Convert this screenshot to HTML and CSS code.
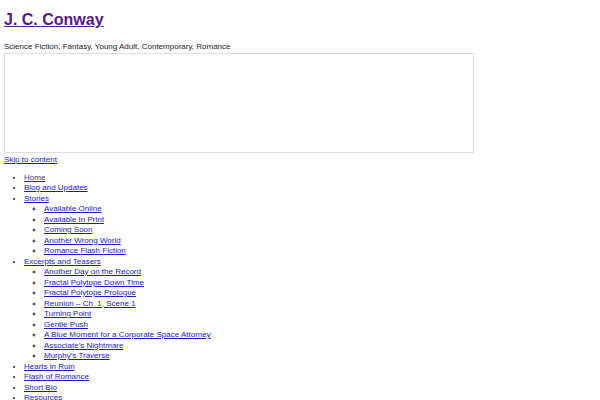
FILE: index.html
```html
<!DOCTYPE html>
<html>
<head>
<meta charset="utf-8">
<link rel="stylesheet" href="styles.css">
</head>
<body>
<header class="site-header">
  <h1 class="site-title"><a class="visited" href="#">J. C. Conway</a></h1>
  <p class="site-desc">Science Fiction, Fantasy, Young Adult, Contemporary, Romance</p>
  <div class="header-box"></div>
</header>
<a class="skip" href="#">Skip to content</a>
<ul class="menu">
  <li><a class="visited" href="#">Home</a></li>
  <li><a href="#">Blog and Updates</a></li>
  <li><a href="#">Stories</a>
    <ul>
      <li><a href="#">Available Online</a></li>
      <li><a href="#">Available In Print</a></li>
      <li><a href="#">Coming Soon</a></li>
      <li><a href="#">Another Wrong World</a></li>
      <li><a href="#">Romance Flash Fiction</a></li>
    </ul>
  </li>
  <li><a href="#">Excerpts and Teasers</a>
    <ul>
      <li><a href="#">Another Day on the Record</a></li>
      <li><a href="#">Fractal Polytope Down Time</a></li>
      <li><a href="#">Fractal Polytope Prologue</a></li>
      <li><a href="#">Reunion – Ch. 1, Scene 1</a></li>
      <li><a href="#">Turning Point</a></li>
      <li><a href="#">Gentle Push</a></li>
      <li><a href="#">A Blue Moment for a Corporate Space Attorney</a></li>
      <li><a href="#">Associate’s Nightmare</a></li>
      <li><a href="#">Murphy’s Traverse</a></li>
    </ul>
  </li>
  <li><a href="#">Hearts in Ruin</a></li>
  <li><a href="#">Flash of Romance</a></li>
  <li><a href="#">Short Bio</a></li>
  <li><a href="#">Resources</a></li>
</ul>
</body>
</html>
```
FILE: styles.css
```css
html, body {
  background: #ffffff;
}
body {
  margin: 4px;
  font-family: "Liberation Sans", Arial, sans-serif;
  font-size: 8px;
  line-height: 10.5px;
  color: #222222;
}
a {
  color: #1a1acc;
}
a.visited {
  color: #551a8b;
}
.site-title {
  font-size: 16px;
  line-height: 18px;
  font-weight: bold;
  margin: 7px 0 13px;
}
.site-desc {
  margin: 0;
}
.header-box {
  width: 468px;
  height: 98px;
  border: 1px solid #dddddd;
  margin-bottom: 2px;
}
.skip {
  display: inline-block;
}
.menu {
  margin: 7.5px 0 0;
  padding-left: 20px;
}
.menu ul {
  margin: 0;
  padding-left: 20px;
  list-style-type: circle;
}
```
